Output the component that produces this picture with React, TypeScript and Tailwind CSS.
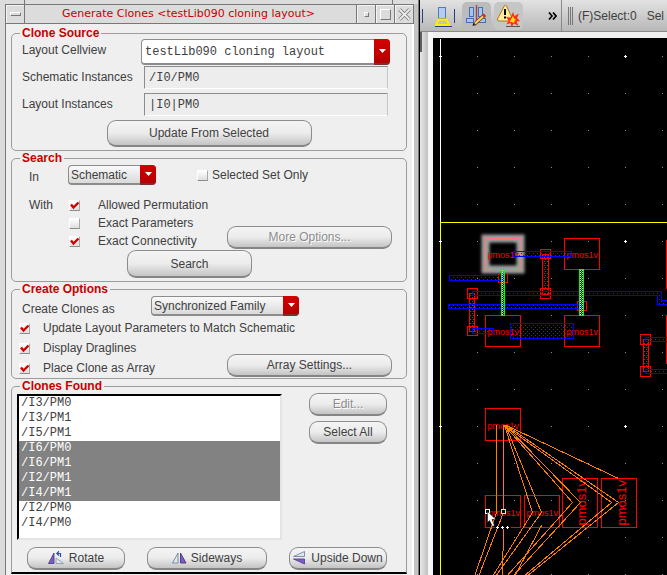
import { ReactNode, useState } from "react";
import clsx from "clsx";

const raised =
  "flex items-center justify-center rounded-[9px] border border-[#8c8c8c] border-b-2 border-b-[#858585] bg-linear-to-b from-[#f4f4f4] via-[#ececec] to-[#c4c4c4] whitespace-nowrap";

function PushButton({ children, className, disabled }: { children: ReactNode; className?: string; disabled?: boolean }) {
  return (
    <button
      type="button"
      disabled={disabled}
      className={clsx(
        raised,
        disabled && "from-[#e2e2e2] via-[#dadada] text-[#8c8c8c] [text-shadow:1px_1px_0_#fff]",
        className,
      )}
    >
      {children}
    </button>
  );
}

function Group({ title, children, className }: { title: string; children: ReactNode; className?: string }) {
  return (
    <fieldset className={clsx("min-w-0 border border-[#9c9c9c]", className)}>
      <legend className="ml-2 h-3 px-0.5 text-xs leading-3 font-bold text-[#c80000]">{title}</legend>
      {children}
    </fieldset>
  );
}

function Tick({ id, checked }: { id: string; checked?: boolean }) {
  return (
    <span className="relative block size-[11px] shrink-0">
      <input
        id={id}
        type="checkbox"
        defaultChecked={checked}
        className="peer block size-[11px] appearance-none border border-t-white border-r-[#a8a8a8] border-b-[#8c8c8c] border-l-white bg-linear-to-b from-white to-[#dedede]"
      />
      <svg viewBox="0 0 11 11" className="pointer-events-none absolute inset-0 hidden size-[11px] peer-checked:block">
        <path d="M2 4.5 L4.5 7.5 L9.5 2.5" fill="none" stroke="#d00000" strokeWidth="2.4" />
      </svg>
    </span>
  );
}

function Dropdown({ id, options, className, mono }: { id: string; options: string[]; className: string; mono?: boolean }) {
  return (
    <span className={clsx("relative block", className)}>
      <select
        id={id}
        className={clsx(
          "block h-full w-full appearance-none rounded-[4px] border border-[#8c8c8c] border-b-2 pr-4 leading-4",
          mono
            ? "bg-white pl-[3px] font-['Liberation_Mono',monospace]"
            : "bg-linear-to-b from-[#fafafa] to-[#dadada] pl-0.5",
        )}
      >
        {options.map((o) => (
          <option key={o}>{o}</option>
        ))}
      </select>
      <span className="pointer-events-none absolute inset-y-0 right-0 flex w-4 items-center justify-center rounded-r-[4px] border-b-2 border-[#7a3030] bg-linear-to-b from-[#d40000] to-[#b40000]">
        <svg width="7" height="4" viewBox="0 0 7 4">
          <path d="M0 0 H7 L3.5 4 Z" fill="#fff" />
        </svg>
      </span>
    </span>
  );
}

const field =
  "mr-0.5 ml-[3px] h-[23px] min-w-0 border border-t-[#8c8c8c] border-r-[#c8c8c8] border-b-white border-l-[#8c8c8c] bg-[#ededed] px-1 font-['Liberation_Mono',monospace]";

function RotateIcon() {
  return (
    <svg width="17" height="14" viewBox="0 0 17 14" className="mr-1">
      <path d="M6 2 V12.5 H0.5 Z" fill="#7a5fc0" stroke="#4a3480" strokeWidth=".8" />
      <path d="M8 7 L15.5 12.5 H8 Z" fill="#dfe6ee" stroke="#8294a8" strokeWidth=".8" />
      <path d="M9 2.5 H12.5 V6 M11 0.3 L8.8 2.5 L11 4.7" fill="none" stroke="#2850a0" strokeWidth="1.2" />
    </svg>
  );
}

function SidewaysIcon() {
  return (
    <svg width="15" height="12" viewBox="0 0 15 12" className="mr-1">
      <path d="M6 1 V11 H0.5 Z" fill="#dfe6ee" stroke="#74879c" strokeWidth=".9" />
      <path d="M8.5 1 V11 H14 Z" fill="#7a5fc0" stroke="#4a3480" strokeWidth=".9" />
    </svg>
  );
}

function UpsideDownIcon() {
  return (
    <svg width="12" height="14" viewBox="0 0 12 14" className="mr-1.5 shrink-0">
      <path d="M11.5 0.5 V5.5 H0.5 Z" fill="#dfe6ee" stroke="#74879c" strokeWidth=".9" />
      <path d="M0.5 8 H11.5 V13 Z" fill="#7a5fc0" stroke="#5a40a0" strokeWidth=".9" />
    </svg>
  );
}

const clones = ["/I3/PM0", "/I3/PM1", "/I5/PM1", "/I6/PM0", "/I6/PM1", "/I2/PM1", "/I4/PM1", "/I2/PM0", "/I4/PM0"];

function CloneDialog() {
  const [picked, setPicked] = useState(["/I6/PM0", "/I6/PM1", "/I2/PM1", "/I4/PM1"]);
  const titleButton =
    "flex h-full w-[19px] items-center justify-center border-l border-l-[#777] bg-[#dcdcdc] shadow-[inset_1px_1px_0_#f4f4f4]";
  return (
    <section className="flex w-[420px] shrink-0 flex-col border-r border-black bg-[#dcdcdc]">
      <div className="flex min-h-0 flex-1 flex-col border-r border-r-[#777]">
        <div className="flex h-1 shrink-0 justify-between pr-[25px] pl-6">
          <span className="border-l border-[#777]" />
          <span className="border-l border-[#777]" />
        </div>
        <div className="flex min-h-0 flex-1 flex-col border-r-[4px] border-l-[5px] border-r-[#c4c4c4] border-l-[#dcdcdc]">
          <header className="flex h-5 shrink-0 items-stretch border border-[#777] bg-[#dcdcdc]">
            <button type="button" aria-label="Window menu" className="flex w-[18px] items-center justify-center shadow-[inset_1px_1px_0_#f4f4f4]">
              <span className="h-1 w-[11px] border border-t-white border-r-[#777] border-b-[#777] border-l-white" />
            </button>
            <h1 className="flex-1 border-l border-[#777] pr-1 text-center font-['DejaVu_Sans',sans-serif] text-[11px] leading-[18px] whitespace-nowrap text-[#c80000]">
              Generate Clones &lt;testLib090 cloning layout&gt;
            </h1>
            <button type="button" aria-label="Minimize" className={titleButton}>
              <span className="size-[5px] border border-t-white border-r-[#777] border-b-[#777] border-l-white" />
            </button>
            <button type="button" aria-label="Maximize" className={titleButton}>
              <span className="size-[11px] border border-t-white border-r-[#777] border-b-[#777] border-l-white" />
            </button>
            <button type="button" aria-label="Close" className={titleButton}>
              <svg width="13" height="13" viewBox="0 0 13 13" fill="none">
                <path d="M1.5 1.5 L11.5 11.5 M11.5 1.5 L1.5 11.5" stroke="#777" strokeWidth="3.4" />
                <path d="M1.5 1.5 L11.5 11.5 M11.5 1.5 L1.5 11.5" stroke="#ececec" strokeWidth="1.8" />
              </svg>
            </button>
          </header>

          <form className="flex flex-1 flex-col gap-px border-r-2 border-l border-r-white border-l-[#777] bg-[#efefef] pt-[3px] pr-[5px] pl-[5px]">
            <Group title="Clone Source" className="rounded-[5px] pb-[3px]">
              <div className="grid auto-rows-[27px] grid-cols-[119px_1fr] items-start pr-4 pl-2.5">
                <label htmlFor="cellview" className="leading-[23px]">Layout Cellview</label>
                <Dropdown id="cellview" mono options={["testLib090 cloning layout"]} className="h-[26px]" />
                <label htmlFor="schInst" className="leading-[23px]">Schematic Instances</label>
                <input id="schInst" readOnly value="/I0/PM0" className={field} />
                <label htmlFor="layInst" className="leading-[23px]">Layout Instances</label>
                <input id="layInst" readOnly value="|I0|PM0" className={field} />
              </div>
              <PushButton className="mx-auto h-[27px] w-[205px]">Update From Selected</PushButton>
            </Group>

            <Group title="Search" className="rounded-[5px] pb-[3px]">
              <div className="flex h-[21px] items-center pt-px pl-[17px]">
                <label htmlFor="searchIn" className="w-[39px] pt-1">In</label>
                <Dropdown id="searchIn" options={["Schematic", "Layout"]} className="h-5 w-[88px]" />
                <span className="ml-[41px] flex items-center gap-1">
                  <Tick id="selSet" />
                  <label htmlFor="selSet">Selected Set Only</label>
                </span>
              </div>
              <div className="mt-[11px] flex items-end justify-between pr-3.5 pl-[17px]">
                <div className="grid auto-rows-[18px] grid-cols-[40px_29px_auto] items-center">
                  <span>With</span>
                  <Tick id="perm" checked />
                  <label htmlFor="perm">Allowed Permutation</label>
                  <span />
                  <Tick id="params" />
                  <label htmlFor="params">Exact Parameters</label>
                  <span />
                  <Tick id="conn" checked />
                  <label htmlFor="conn">Exact Connectivity</label>
                </div>
                <PushButton disabled className="mb-px h-[23px] w-[165px]">More Options...</PushButton>
              </div>
              <PushButton className="ml-[115px] h-7 w-[125px]">Search</PushButton>
            </Group>

            <Group title="Create Options" className="rounded-[5px]">
              <div className="flex h-[23px] items-start pt-px pl-2.5">
                <label htmlFor="createAs" className="w-[129px] pt-[5px]">Create Clones as</label>
                <Dropdown id="createAs" options={["Synchronized Family", "Free Objects"]} className="h-5 w-[148px]" />
              </div>
              <div className="flex h-5 items-center gap-[13px] pl-[7px]">
                <Tick id="upd" checked />
                <label htmlFor="upd">Update Layout Parameters to Match Schematic</label>
              </div>
              <div className="flex items-end justify-between pr-3.5 pl-[7px]">
                <div>
                  <div className="flex h-5 items-center gap-[13px]">
                    <Tick id="drag" checked />
                    <label htmlFor="drag">Display Draglines</label>
                  </div>
                  <div className="flex h-5 items-center gap-[13px]">
                    <Tick id="arr" checked />
                    <label htmlFor="arr">Place Clone as Array</label>
                  </div>
                </div>
                <PushButton className="mb-px h-[23px] w-[165px]">Array Settings...</PushButton>
              </div>
            </Group>

            <Group title="Clones Found" className="rounded-t-[5px] border-b-2 border-b-black pb-0.5">
              <div className="flex items-start justify-between pt-px pr-[19px] pl-[5px]">
                <select
                  multiple
                  size={9}
                  aria-label="Clones found"
                  value={picked}
                  onChange={(e) => setPicked(Array.from(e.target.selectedOptions, (o) => o.value))}
                  className="mt-px h-[146px] w-[265px] appearance-none overflow-hidden rounded-none border-2 border-t-black border-r-[#e4e4e4] border-b-[#e4e4e4] border-l-black bg-white font-['Liberation_Mono',monospace] outline-none"
                >
                  {clones.map((c) => (
                    <option
                      key={c}
                      className="h-[15px] px-0.5 py-0 leading-[15px] checked:bg-linear-to-b checked:from-[#828282] checked:to-[#828282] checked:[-webkit-text-fill-color:white]"
                    >
                      {c}
                    </option>
                  ))}
                </select>
                <div className="flex w-[78px] flex-col gap-[5px]">
                  <PushButton disabled className="h-[23px]">Edit...</PushButton>
                  <PushButton className="h-[23px]">Select All</PushButton>
                </div>
              </div>
              <div className="mt-[7px] flex justify-between pr-[19px] pl-[15px]">
                <PushButton className="h-[23px] w-[98px]"><RotateIcon />Rotate</PushButton>
                <PushButton className="h-[23px] w-[120px]"><SidewaysIcon />Sideways</PushButton>
                <PushButton className="h-[23px] w-[98px]"><UpsideDownIcon />Upside Down</PushButton>
              </div>
            </Group>
          </form>
        </div>
      </div>
    </section>
  );
}

function Toolbar() {
  return (
    <div className="flex h-8 shrink-0 items-center overflow-hidden border-b border-[#8a8a8a] bg-linear-to-b from-[#e2e2e2] to-[#b8b8b8] whitespace-nowrap">
      <span className="ml-0.5 h-3.5 w-px shrink-0 bg-[#28407c]" />
      <button type="button" aria-label="Highlight" className="ml-3 shrink-0">
        <svg width="17" height="22" viewBox="0 0 17 22">
          <rect x="3.5" y="2.5" width="7" height="11" fill="#b4ccf0" stroke="#5878b4" />
          <path d="M3.5 14.5 H11.5 L14 20 H1 Z" fill="#c8c8a0" stroke="#ffee00" strokeWidth="2" />
          <path d="M0 21.5 H17" stroke="#28407c" />
        </svg>
      </button>
      <span className="ml-[2px] h-3.5 w-px shrink-0 bg-[#28407c]" />
      <button type="button" aria-label="Edit in place" className="ml-[7px] flex h-7 w-[29px] shrink-0 items-center justify-center rounded-[5px] bg-[#bcbcbc]">
        <svg width="21" height="21" viewBox="0 0 21 21">
          <g fill="#a8c4ec" stroke="#4a6cb0">
            <rect x="3.5" y="2.5" width="4" height="9" />
            <rect x="12.5" y="2.5" width="4" height="9" />
            <rect x="0.5" y="13.5" width="7" height="4" />
            <rect x="12.5" y="13.5" width="7" height="4" />
          </g>
          <path d="M10.5 0 V18" stroke="#a04050" strokeWidth="1.4" />
          <path d="M8 19.5 L18.5 10" stroke="#704010" strokeWidth="3.6" />
          <path d="M9 18.5 L17.5 11" stroke="#ffd860" strokeWidth="2" />
          <path d="M17 11.5 L19 9.7" stroke="#d03020" strokeWidth="3.4" />
          <path d="M6.5 20.8 L7.3 18.4 L9 20.2 Z" fill="#000" />
        </svg>
      </button>
      <button type="button" aria-label="Warnings" className="ml-[3px] flex h-7 w-[29px] shrink-0 items-center justify-center rounded-[5px] bg-[#c6c6c6]">
        <svg width="25" height="24" viewBox="0 0 25 24">
          <path d="M8.5 1.5 Q9.5 1 10.5 2 L16.5 15 Q16.5 17 15 17 H3 Q1 17 1.5 15 Z" fill="#ffee9a" stroke="#b07820" />
          <path d="M9 5 V11 M9 12.5 V14.5" stroke="#000" strokeWidth="2" />
          <path d="M10 22.5 H24" stroke="#555" />
          <path d="M17 8 L18.5 12 L23 9.5 L21 14 L24 17 L20.5 17.5 L22.5 22 L18 19.5 L15.5 23 L14.5 19 L10.5 20.5 L12.5 16.5 L10 13 L14.5 13.5 Z" fill="#ff3010" />
          <path d="M17 12 L18.5 15 L20 15.5 L18.5 17 L18 19 L15.8 18 L13.5 18 L14.8 15.8 Z" fill="#ffdc20" />
        </svg>
      </button>
      <button type="button" aria-label="More tools" className="ml-[25px] shrink-0">
        <svg width="9" height="8" viewBox="0 0 9 8">
          <path d="M1 0.5 L4 4 L1 7.5 M5 0.5 L8 4 L5 7.5" fill="none" stroke="#000" strokeWidth="1.7" />
        </svg>
      </button>
      <span className="ml-1 h-full w-px shrink-0 bg-[#8a8a8a]" />
      <span className="ml-1.5 flex h-[18px] shrink-0 gap-px">
        <span className="w-px bg-[#777]" />
        <span className="w-px bg-[#777]" />
        <span className="w-px bg-[#777]" />
      </span>
      <span className="ml-[5px] shrink-0">(F)Select:0</span>
      <span className="ml-2.5 shrink-0">Sel</span>
    </div>
  );
}

const gridX = [440, 477, 514, 551, 588, 625, 662];
const gridY = [56, 93, 130, 167, 204, 241, 278, 315, 352, 389, 426, 463, 500, 537, 574];

const cells = [
  [485, 238, 35, 31], [564, 238, 35, 31], [485, 315, 35, 31], [564, 315, 35, 31],
  [485, 408, 35, 32], [485, 495, 35, 32], [524, 495, 35, 32], [562, 478, 35, 49], [601, 478, 35, 49],
];
const contacts = [
  [540, 249, 10, 9], [540, 288, 10, 10], [498, 273, 9, 9], [467, 288, 10, 10],
  [467, 326, 10, 9], [577, 301, 9, 9], [640, 334, 10, 10], [640, 366, 10, 10],
];
const redStrips = [[542, 254, 6, 40], [469, 293, 5, 38], [643, 339, 5, 32]];
const blueStrips = [
  [513, 251, 58, 5], [449, 275, 54, 5], [448, 304, 133, 4], [472, 328, 21, 5],
  [645, 337, 40, 4], [645, 369, 40, 4],
];
const greenStrips = [[501, 269, 3, 46], [579, 269, 4, 46]];
const names = [[487, 257], [566, 257], [487, 334], [566, 334], [487, 428], [488, 515], [526, 515]];
const crosses = [[440, 56], [440, 241], [440, 426], [625, 56], [625, 241], [625, 426]];
const handles = [[497, 527], [502, 527], [507, 527]];
const drag = [
  "M496 424 V512 L474 576", "M503 424 V512 L478 576", "M503 527 L502 576",
  "M504 425 L532 512 L492 576", "M505 425 L541 512 L495 576", "M541 525 L514 576",
  "M504 425 L572 502 L506 576", "M505 425 L580 502 L512 576",
  "M504 425 L611 502 L523 576", "M506 425 L618 502 L526 576", "M506 425 L618 478",
];

function Rects({ list, fill }: { list: number[][]; fill: string }) {
  return (
    <>
      {list.map(([x, y, w, h]) => (
        <rect key={`${x}-${y}`} x={x} y={y} width={w} height={h} fill={fill} />
      ))}
    </>
  );
}

function Crosses({ list }: { list: number[][] }) {
  return (
    <g fill="#fff">
      {list.map(([x, y]) => (
        <path key={`${x}-${y}`} d={`M${x - 1} ${y} h3 v1 h-3 z M${x} ${y - 1} h1 v3 h-1 z`} />
      ))}
    </g>
  );
}

function LayoutCanvas() {
  return (
    <svg className="block min-h-0 w-full flex-1 bg-black" role="img" aria-label="Layout canvas">
      <defs>
        <pattern id="bd" width="4" height="4" patternUnits="userSpaceOnUse" patternTransform="translate(.5 .5)">
          <rect width="1" height="1" fill="#2020ff" />
          <rect x="2" y="2" width="1" height="1" fill="#2020ff" />
        </pattern>
        <pattern id="rd" width="3" height="4" patternUnits="userSpaceOnUse" patternTransform="translate(.5 .5)">
          <rect width="1" height="1" fill="#ff0000" />
          <rect x="1" y="2" width="1" height="1" fill="#ff0000" />
        </pattern>
        <pattern id="gd" width="2" height="2" patternUnits="userSpaceOnUse" patternTransform="translate(.5 .5)">
          <rect width="1" height="1" fill="#00ff00" />
          <rect x="1" y="1" width="1" height="1" fill="#b0ffb0" />
        </pattern>
        <filter id="halo" x="-50%" y="-50%" width="200%" height="200%">
          <feGaussianBlur stdDeviation="1.8" />
        </filter>
      </defs>
      <g transform="translate(-433 -38)">
        <g fill="#8c8ca0">
          {gridY.map((y) => gridX.map((x) => <rect key={`${x}-${y}`} x={x} y={y} width="1" height="1" />))}
        </g>
        <g transform="translate(.5 .5)" fill="none" shapeRendering="crispEdges">
          <path d="M440 38 V222" stroke="#fff" />
          <path d="M440 640 V222 H2000" stroke="#ffff00" />
          <rect x="485" y="238" width="35" height="31" stroke="#a0a0a0" strokeWidth="8" filter="url(#halo)" shapeRendering="auto" />
          <g stroke="#ff0000">
            <Rects list={cells} fill="none" />
            <Rects list={contacts} fill="none" />
            <Rects list={redStrips} fill="url(#rd)" />
            <path d="M666 239 V288 M666 314 V363" />
          </g>
          <rect x="485" y="238" width="35" height="31" stroke="#ff7878" />
          <g fill="#ff0000" fontFamily="Liberation Sans, sans-serif">
            {names.map(([x, y]) => (
              <text key={`${x}-${y}`} x={x} y={y} fontSize="9">pmos1v</text>
            ))}
            <text transform="translate(585 525) rotate(-90)" fontSize="13">pmos1v</text>
            <text transform="translate(625 525) rotate(-90)" fontSize="13">pmos1v</text>
          </g>
          <g stroke="#0000ff">
            <Rects list={blueStrips} fill="url(#bd)" />
            <rect x="510" y="323" width="63" height="15" fill="url(#bd)" />
            <path d="M680 300 H661 V291 H472 V295 H657 V304 H680" fill="url(#bd)" />
          </g>
          <g stroke="#00ff00">
            <Rects list={greenStrips} fill="url(#gd)" />
          </g>
          <g stroke="#ff8000">
            {drag.map((d) => (
              <path key={d} d={d} />
            ))}
          </g>
          <path d="M494 527 H510" stroke="#000" strokeWidth="3" />
          <rect x="485" y="509" width="4" height="4" stroke="#fff" fill="#000" />
          <rect x="501" y="509" width="4" height="4" stroke="#ffff00" fill="#000" />
          <path d="M487 511 L487 522 L489 520 L492 526 L494 525 L491.5 519 L495.5 519 Z" fill="#fff" stroke="#000" strokeWidth=".5" shapeRendering="auto" />
        </g>
        <Crosses list={crosses} />
        <Crosses list={handles} />
      </g>
    </svg>
  );
}

export default function App() {
  return (
    <main className="flex h-screen overflow-hidden bg-[#efefef] font-['Liberation_Sans',Arial,sans-serif] text-xs text-[#404040]">
      <CloneDialog />
      <section className="flex min-w-0 flex-1 flex-col">
        <Toolbar />
        <div className="flex min-h-0 flex-1">
          <div className="flex w-[13px] shrink-0 flex-col border-r-[5px] border-r-[#f6f6f6] bg-linear-to-r from-[#e8e8e8] to-[#c0c0c4]">
            <span className="h-5 w-0.5 bg-[#606060]" />
          </div>
          <div className="flex min-w-0 flex-1 flex-col pt-1.5">
            <LayoutCanvas />
          </div>
        </div>
      </section>
    </main>
  );
}
